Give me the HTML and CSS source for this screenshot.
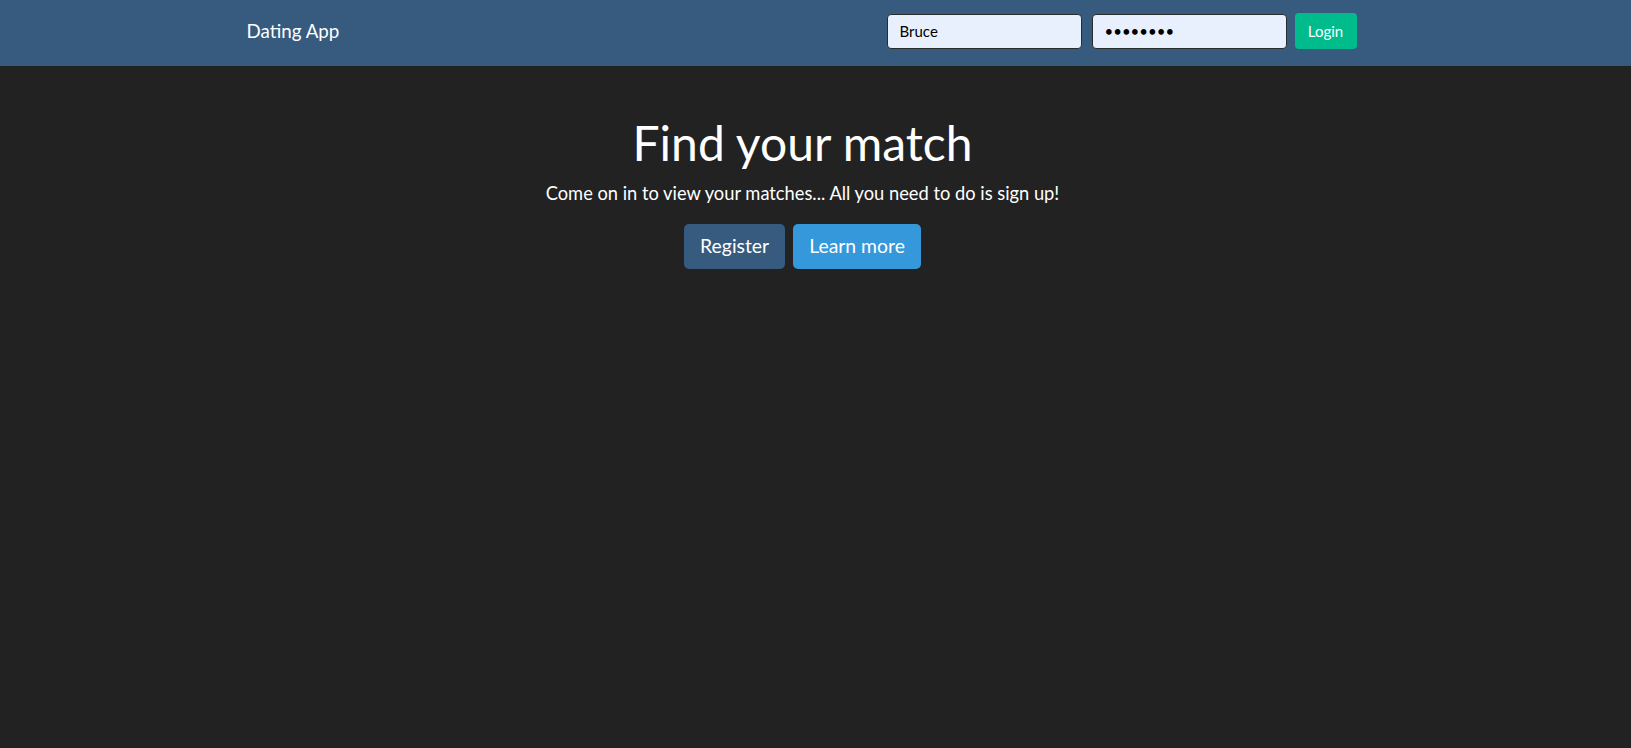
FILE: index.html
```html
<!DOCTYPE html>
<html lang="en">
<head>
<meta charset="utf-8">
<title>Dating App</title>
<link rel="stylesheet" href="styles.css">
</head>
<body>
<nav class="navbar">
  <div class="nav-inner">
    <a class="brand" href="#">Dating App</a>
    <form class="login-form">
      <input class="field" type="text" value="Bruce">
      <input class="field" type="password" value="password">
      <button class="btn btn-success" type="button">Login</button>
    </form>
  </div>
</nav>
<main class="hero">
  <h1 class="title">Find your match</h1>
  <p class="lead">Come on in to view your matches... All you need to do is sign up!</p>
  <div class="actions">
    <button class="btn btn-lg btn-primary" type="button">Register</button>
    <button class="btn btn-lg btn-info" type="button">Learn more</button>
  </div>
</main>
</body>
</html>
```
FILE: styles.css
```css
* { box-sizing: border-box; }
html, body { margin: 0; padding: 0; }
body {
  background: #222222;
  color: #ffffff;
  font-family: Lato, "Liberation Sans", sans-serif;
  font-size: 15px;
  line-height: 1.5;
  min-height: 748px;
}
.navbar {
  background: #375a7f;
  height: 66px;
  padding-top: 13px;
}
.nav-inner {
  width: 1140px;
  margin: 0 auto;
  padding-right: 29px;
  height: 36px;
  display: flex;
  align-items: center;
  justify-content: space-between;
}
.brand {
  color: #ffffff;
  text-decoration: none;
  font-size: 18.75px;
  margin-left: 1px;
}
.login-form {
  display: flex;
  align-items: center;
  gap: 10px;
}
.field {
  width: 195px;
  height: 35px;
  background: #e8f0fe;
  border: 1px solid #2b2b2b;
  border-radius: 4px;
  padding: 0 12px;
  font-family: Lato, "Liberation Sans", sans-serif;
  font-size: 15px;
  color: #000;
}
.btn {
  border: 0;
  border-radius: 4px;
  color: #fff;
  font-family: Lato, "Liberation Sans", sans-serif;
  font-size: 15px;
  line-height: 1.5;
  padding: 6px 12px;
  cursor: pointer;
}
.btn-success {
  background: #00bc8c;
  height: 36px;
  width: 62px;
  padding: 0;
  margin-left: -2px;
}
.btn-primary { background: #375a7f; }
.btn-info { background: #3498db; }
.btn-lg {
  font-size: 19.4px;
  padding: 7px 16px 8px;
  height: 45px;
  border-radius: 5px;
}
.hero {
  display: flex;
  flex-direction: column;
  align-items: center;
  padding-top: 48px;
  margin-right: 26px;
}
.title {
  margin: 0;
  font-weight: 400;
  font-size: 48px;
  line-height: 1.2;
}
.lead {
  margin: 8px 0 17px;
  font-size: 18.3px;
}
.actions {
  display: flex;
  gap: 8px;
}
```
